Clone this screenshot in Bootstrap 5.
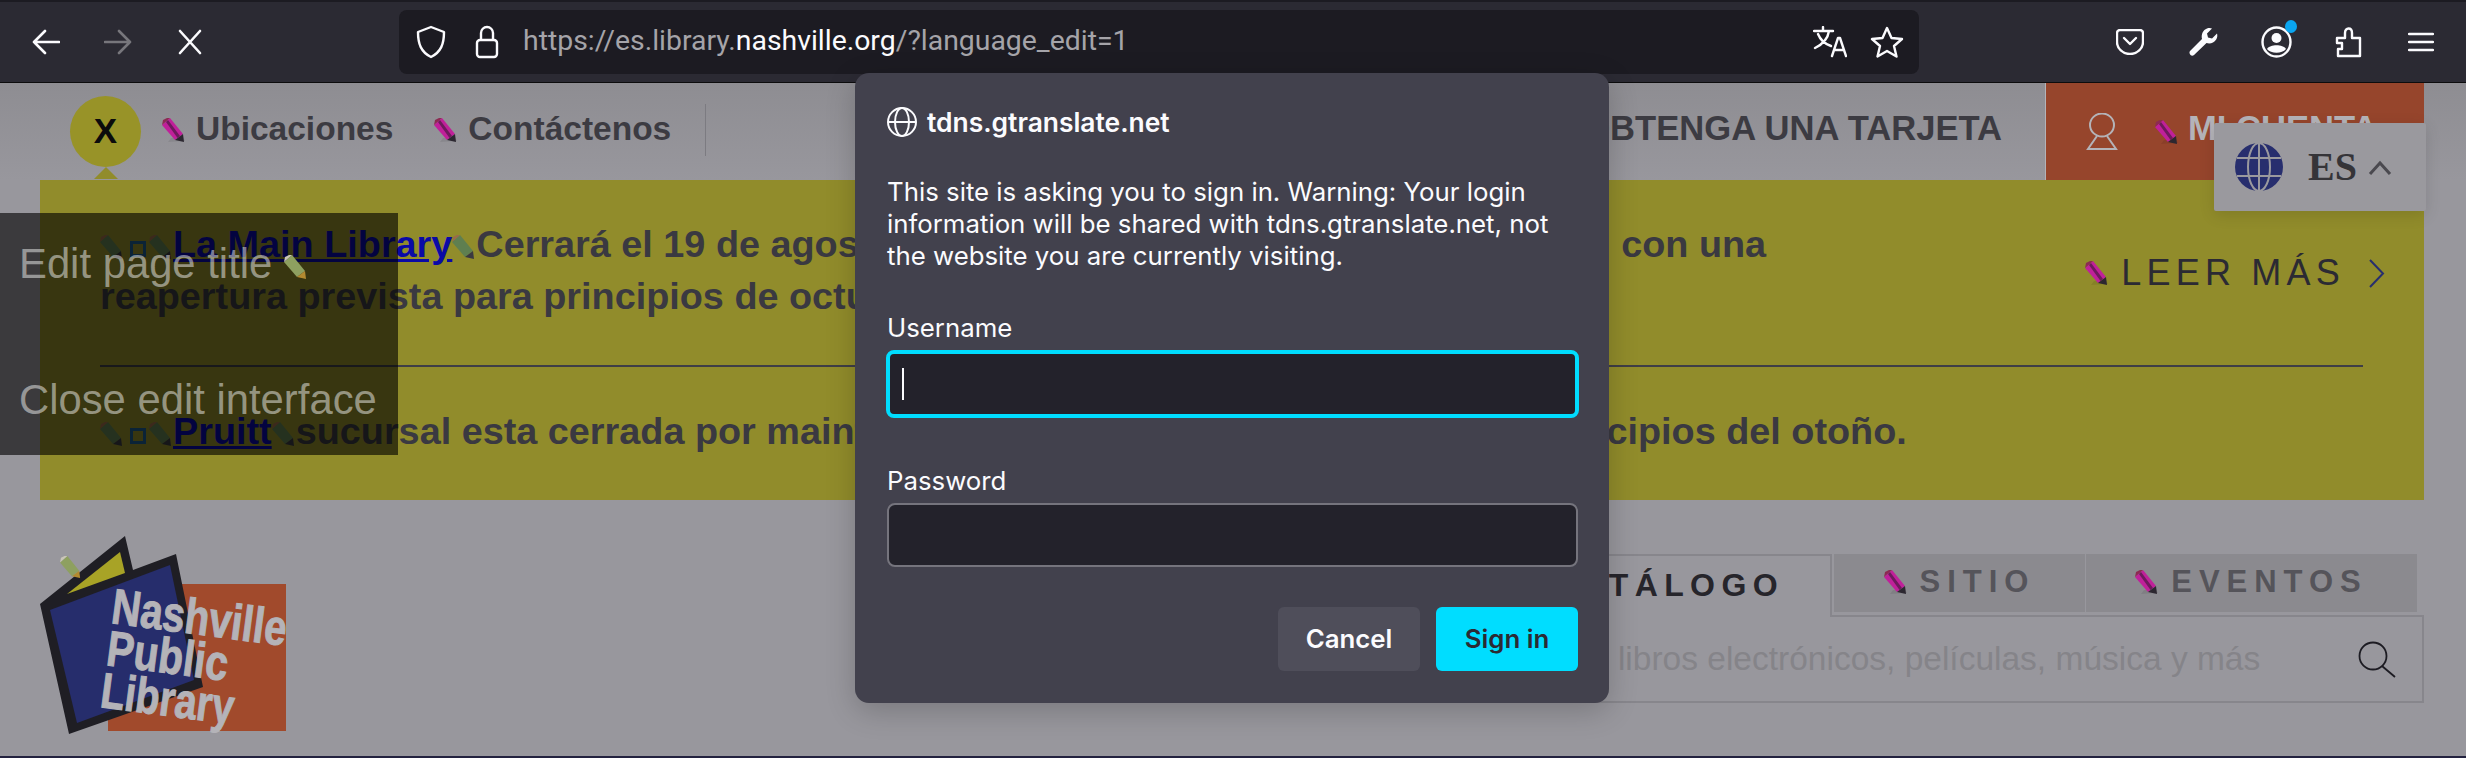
<!DOCTYPE html>
<html lang="es">
<head>
  <meta charset="UTF-8">
  <title>Nashville Public Library</title>
  <link href="https://cdn.jsdelivr.net/npm/bootstrap@5.3.3/dist/css/bootstrap.min.css" rel="stylesheet">
  <style>
    html, body { height: 100%; }
    body {
      background: #98979d;
      font-family: "Liberation Sans", Arial, sans-serif;
      overflow: hidden;
      position: relative;
      border-bottom: 2px solid #23223f;
    }

    /* barra del navegador */
    .top-strip { height: 2px; background: #1c1b22; }
    .tool-bar { height: 81px; background: #2b2a33; border-bottom: 1px solid #0c0c0d; padding-bottom: 1px; }
    .tool-icon { flex: none; display: block; }
    .url-bar {
      width: 1520px; height: 64px; margin-left: 197px;
      background: #1c1b22; border-radius: 8px;
      font-family: Roboto, sans-serif; font-size: 28.4px; color: #a5a4a9;
      padding: 0 15px 0 17px;
    }
    .url-bar b { color: #fbfbfe; font-weight: 400; }
    .url-text { margin-left: 24px; }

    /* cabecera del sitio */
    .site-head { height: 97px; background: linear-gradient(#8e8d92, #98979d); }
    .x-badge {
      width: 71px; height: 71px; margin: 13px 0 0 70px; flex: none;
      background: #989328; color: #0b0b0c; border-radius: 50%;
      font-size: 35px; font-weight: 700;
    }
    .x-badge::after {
      content: ""; position: absolute; left: 24px; top: 71px;
      border: 12px solid transparent; border-top: 0; border-bottom-color: #918c2b; border-bottom-width: 12px;
    }
    .head-link { font-size: 33.5px; font-weight: 700; color: #3c3b42; white-space: nowrap; }
    .head-rule { width: 1px; height: 52px; background: #7c7b81; margin-left: 34px; }
    .pen { display: inline-block; width: 24px; height: 24px; flex: none; }
    .card-link-top { font-size: 34.6px; margin-right: 43px; margin-bottom: 6px; }
    .account-box {
      width: 379px; height: 97px; margin-right: 42px; flex: none;
      background: #96452c; border-left: 1px solid #b4b3b8; padding-left: 40px;
      color: #b4b3b8; font-size: 34.6px; font-weight: 700; white-space: nowrap;
    }
    .account-name { margin: 0 0 6px 9px; }

    /* aviso amarillo */
    .notice-box {
      height: 320px; margin: 0 42px 0 40px; padding: 38px 61px 0 60px;
      background: #918c2b; color: #3a3941;
      font-size: 37.8px; font-weight: 700; line-height: 52px;
    }
    .notice-box a { color: #0a0aa6; }
    .blue-sq { display: inline-block; width: 16px; height: 16px; border: 3px solid #1d5a8c; margin: 0 3px 0 6px; }
    .notice-rule { height: 2px; background: #3f3e46; margin: 43px 0 38px; }
    .read-more {
      color: #2b2a33; font-size: 36px; font-weight: 400; letter-spacing: 5.2px;
      white-space: nowrap; margin: 6px -22px 0 0; line-height: 40px;
    }
    .read-pen { margin-right: 12px; }

    /* logo y buscador */
    .lower-part { padding: 30px 42px 0 40px; }
    .logo-word { font-family: "Liberation Sans", Arial, sans-serif; font-weight: 700; fill: #b4b3b8; stroke: #b4b3b8; stroke-width: 1; }
    .search-part { width: 961px; margin-top: 24px; }
    .tab-row { height: 61px; }
    .tab-item {
      height: 58px; background: #8b8a8f; color: #55545a; margin-right: 1px; padding-bottom: 2px; gap: 12px;
      font-size: 31px; font-weight: 700; letter-spacing: 7px;
    }
    .tab-on {
      width: 369px; height: 63px; background: #98979d; color: #26252b; margin-right: 2px; padding-bottom: 4px;
      border: 2px solid #87868c; border-bottom: 0; position: relative;
      font-size: 32px; letter-spacing: 6.4px; padding-left: 0;
    }
    .search-box { height: 88px; border: 2px solid #87868c; padding-right: 26px; }
    .search-field {
      background: transparent; border: 0; border-radius: 0; box-shadow: none;
      font-size: 33.5px; padding: 0 0 0 30px; height: 60px;
    }
    .search-field::placeholder { color: #858489; opacity: 1; }
    .search-field:focus { background: transparent; box-shadow: none; }

    /* cosas por encima de la pagina */
    .edit-panel {
      position: absolute; left: 0; top: 213px; width: 398px; height: 242px;
      background: rgba(0, 0, 0, .61); color: rgba(255, 255, 255, .48);
      font-size: 41.8px; line-height: 46px; padding: 28px 0 0 19px; white-space: nowrap;
    }
    .edit-panel div + div { margin-top: 90px; }
    .lang-box {
      position: absolute; left: 2214px; top: 123px; width: 212px; height: 88px;
      background: #9a999e; box-shadow: 0 4px 16px rgba(0, 0, 0, .12); border-radius: 2px;
      padding-left: 21px; color: #353438;
      font-family: "Liberation Serif", serif; font-size: 40px; font-weight: 700;
    }
    .login-dialog {
      position: absolute; left: 855px; top: 73px; width: 754px; height: 630px; z-index: 10;
      background: #42414d; color: #fbfbfe; border-radius: 14px;
      box-shadow: 0 8px 30px rgba(0, 0, 0, .2);
      padding: 31px 31px 0 32px;
      font-family: Inter, sans-serif; font-size: 25.8px; line-height: 32px;
    }
    .dialog-host { font-weight: 600; font-size: 26.4px; line-height: 36px; margin-bottom: 36px; margin-left: 0; gap: 10px; }
    .dialog-msg { margin-bottom: 40px; white-space: nowrap; }
    .dialog-label { display: block; margin-bottom: 6px; line-height: 32px; }
    .dialog-field {
      height: 64px; background: #23222b; border: 2px solid #75747d; border-radius: 8px;
      box-shadow: none; color: #fbfbfe; margin-bottom: 23px; position: relative;
    }
    .dialog-field:focus { background: #23222b; border-color: #75747d; box-shadow: none; color: #fbfbfe; }
    .field-on {
      height: 68px; margin: 0 -1px 47px -1px; width: calc(100% + 2px);
      border: 4px solid #00ddff;
    }
    .field-on::before {
      content: ""; position: absolute; left: 12px; top: 14px; width: 2px; height: 32px; background: #fbfbfe;
    }
    .btn-cancel, .btn-signin {
      width: 142px; height: 64px; border: 0; border-radius: 6px; padding: 0;
      font-family: Inter, sans-serif; font-size: 25.8px; font-weight: 600;
    }
    .btn-cancel { background: #4f4e5a; color: #fbfbfe; }
    .btn-signin { background: #00ddff; color: #2b2a33; }
  </style>
</head>
<body>

<svg width="0" height="0" class="position-absolute">
  <symbol id="pen-pink" viewBox="0 0 24 24">
    <polygon points="6,24 23,23 21,19 9,20" fill="#000" opacity=".08"/>
    <polygon points="0,7 8,0 21,16 13,22" fill="#c0209a"/>
    <polygon points="4,4 6,2 18,18 15.500,20" fill="#6d1a5c"/>
    <polygon points="0,7 8,0 5,0 1,2" fill="#8c2a52"/>
    <polygon points="13,22 21,16 22,24" fill="#2c2730"/>
  </symbol>
  <symbol id="pen-green" viewBox="0 0 24 24">
    <polygon points="0,7 8,0 21,16 13,22" fill="#5f7f50"/>
    <polygon points="0,7 8,0 5,0 1,2" fill="#9a6a4a"/>
    <polygon points="13,22 21,16 22,24" fill="#3a3941"/>
  </symbol>
  <symbol id="pen-pale" viewBox="0 0 24 24">
    <polygon points="0,7 8,0 21,16 13,22" fill="#8ea060"/>
    <polygon points="0,7 8,0 5,0 1,2" fill="#c9c5b8"/>
    <polygon points="13,22 21,16 22,24" fill="#b38a30"/>
  </symbol>
</svg>

<div class="top-strip"></div>

<!-- barra de firefox -->
<div class="tool-bar d-flex align-items-center">
  <svg class="tool-icon" style="margin-left:32px" width="28" height="26" viewBox="0 0 28 26" fill="none" stroke="#fbfbfe" stroke-width="2.600" stroke-linecap="round" stroke-linejoin="round"><path d="M2 13h25M13 2 2 13l11 11"/></svg>
  <svg class="tool-icon" style="margin-left:44px" width="28" height="26" viewBox="0 0 28 26" fill="none" stroke="#77767c" stroke-width="2.600" stroke-linecap="round" stroke-linejoin="round"><path d="M26 13H1M15 2l11 11-11 11"/></svg>
  <svg class="tool-icon" style="margin-left:46px" width="24" height="26" viewBox="0 0 24 26" fill="none" stroke="#fbfbfe" stroke-width="2.600" stroke-linecap="round"><path d="M2 2l20 22M22 2 2 24"/></svg>

  <div class="url-bar d-flex align-items-center" style="margin-left:197px">
    <svg class="tool-icon" width="30" height="34" viewBox="0 0 30 34" fill="none" stroke="#fbfbfe" stroke-width="2.400" stroke-linejoin="round"><path d="M15 2 28 7c0 12-3 20-13 25C5 27 2 19 2 7z"/></svg>
    <svg class="tool-icon" style="margin-left:29px" width="24" height="34" viewBox="0 0 24 34" fill="none" stroke="#fbfbfe" stroke-width="2.400" stroke-linejoin="round"><rect x="2" y="15" width="20" height="17" rx="3"/><path d="M6 15V8a6 6 0 0 1 12 0v7"/></svg>
    <span class="url-text">https://es.library.<b>nashville.org</b>/?language_edit=1</span>
    <svg class="tool-icon ms-auto" width="34" height="32" viewBox="0 0 34 32" fill="none" stroke="#fbfbfe" stroke-width="2.400" stroke-linecap="round" stroke-linejoin="round"><path d="M1 5h19M10 1v4M16 5c-1 7-6 13-14 17M5 8c2 5 7 10 13 12M19 30l6-18 2 0 6 18M21 24h10"/></svg>
    <svg class="tool-icon" style="margin-left:23px" width="34" height="32" viewBox="0 0 34 32" fill="none" stroke="#fbfbfe" stroke-width="2.400" stroke-linejoin="round"><path d="M17 2l4.500 10 10.500 1-8 7 2.500 10.500L17 25l-9.500 5.500L10 20l-8-7 10.500-1z"/></svg>
  </div>

  <svg class="tool-icon" style="margin-left:197px" width="28" height="26" viewBox="0 0 28 26" fill="none" stroke="#fbfbfe" stroke-width="2.400" stroke-linecap="round" stroke-linejoin="round"><path d="M4 1h20a3 3 0 0 1 3 3v9a13 12 0 0 1-26 0V4a3 3 0 0 1 3-3z"/><path d="M8 9l6 6 6-6"/></svg>
  <svg class="tool-icon" style="margin-left:44px" width="30" height="30" viewBox="0 0 30 30" fill="#fbfbfe"><path d="M2 24 14 12c-1-5 1-9 5-10.500 2-.8 4-.5 5 0l-5 5 1 4 4 1 5-5c.6 2 .4 4-.8 6-2.400 3.500-6.200 4.700-9.700 3.500L6 28c-1 1-2.500 1-3.500 0S1 25 2 24z"/></svg>
  <div class="position-relative" style="margin-left:43px;height:32px">
    <svg class="tool-icon" width="31" height="32" viewBox="0 0 31 32" fill="none" stroke="#fbfbfe" stroke-width="2.400"><ellipse cx="15.500" cy="16" rx="14" ry="14.500"/><circle cx="15.500" cy="12" r="5" fill="#fbfbfe" stroke="none"/><path d="M6 23c3-5 16-5 19 0-4 5-15 5-19 0z" fill="#fbfbfe" stroke="none"/></svg>
    <span class="position-absolute rounded-circle" style="left:24px;top:-6px;width:12px;height:13px;background:#0aa5f0"></span>
  </div>
  <svg class="tool-icon" style="margin-left:43px" width="27" height="32" viewBox="0 0 27 32" fill="none" stroke="#fbfbfe" stroke-width="2.400" stroke-linejoin="round"><path d="M2 12h8V7c0-6 7-6 7 0v5h8v18H3v-7h4v-6H2z"/></svg>
  <svg class="tool-icon" style="margin-left:46px" width="26" height="20" viewBox="0 0 26 20" stroke="#fbfbfe" stroke-width="2.400" stroke-linecap="round"><path d="M1 2h24M1 10h24M1 18h24"/></svg>
</div>

<!-- cabecera -->
<header class="site-head d-flex">
  <div class="x-badge d-flex align-items-center justify-content-center position-relative">X</div>
  <div class="d-flex align-items-center" style="margin-bottom:4px">
    <svg class="pen" style="margin-left:21px"><use href="#pen-pink"/></svg>
    <span class="head-link" style="margin-left:10px">Ubicaciones</span>
    <svg class="pen" style="margin-left:41px"><use href="#pen-pink"/></svg>
    <span class="head-link" style="margin-left:10px">Contáctenos</span>
    <span class="head-rule"></span>
  </div>
  <div class="ms-auto d-flex align-items-center">
    <span class="head-link card-link-top">OBTENGA UNA TARJETA</span>
    <div class="account-box d-flex align-items-center">
      <svg class="tool-icon" width="32" height="37" viewBox="0 0 32 37" fill="none" stroke="#b4b3b8" stroke-width="2"><ellipse cx="16" cy="12" rx="12" ry="11.500"/><path d="M11 23 2 36h28l-9-13"/></svg>
      <svg class="pen" style="margin-left:37px"><use href="#pen-pink"/></svg>
      <span class="account-name">MI CUENTA</span>
    </div>
  </div>
</header>

<!-- aviso -->
<section class="notice-box">
  <div class="d-flex justify-content-between">
    <p class="m-0 text-nowrap"><svg class="pen"><use href="#pen-green"/></svg><span class="blue-sq"></span><svg class="pen"><use href="#pen-green"/></svg><a href="#">La Main Library</a><svg class="pen"><use href="#pen-green"/></svg>Cerrará el 19 de agosto para realizar reparaciones importantes, con una<br>
      reapertura prevista para principios de octubre.
    </p>
    <div class="read-more d-flex align-items-center">
      <svg class="pen read-pen"><use href="#pen-pink"/></svg>LEER MÁS
      <svg class="tool-icon" style="margin-left:23px" width="17" height="29" viewBox="0 0 17 29" fill="none" stroke="#272e6e" stroke-width="2"><path d="M2 1l13 13.500L2 28"/></svg>
    </div>
  </div>
  <div class="notice-rule"></div>
  <p class="m-0 text-nowrap"><svg class="pen"><use href="#pen-green"/></svg><span class="blue-sq"></span><svg class="pen"><use href="#pen-green"/></svg><a href="#">Pruitt</a><svg class="pen"><use href="#pen-green"/></svg>sucursal esta cerrada por maintenance, y una reapertura prevista en principios del otoño.
  </p>
</section>

<!-- logo y buscador -->
<section class="lower-part d-flex justify-content-between">
  <svg width="250" height="210" viewBox="40 530 250 210">
    <rect x="108" y="584" width="178" height="147" fill="#a14a2c"/>
    <polygon points="40,604 125,536 133,570 176,554 203,687 69,734" fill="#1f1e24"/>
    <polygon points="67,594 120,552 125,573" fill="#a8a326"/>
    <polygon points="50,610 170,565 194,680 77,723" fill="#262d6c"/>
    <use href="#pen-pale" x="60" y="556" width="22" height="22"/>
    <text class="logo-word" transform="translate(110 623) rotate(7.500)" font-size="50" textLength="176" lengthAdjust="spacingAndGlyphs">Nashville</text>
    <text class="logo-word" transform="translate(105 665) rotate(7.500)" font-size="50" textLength="122" lengthAdjust="spacingAndGlyphs">Public</text>
    <text class="logo-word" transform="translate(99 707) rotate(7.500)" font-size="50" textLength="134" lengthAdjust="spacingAndGlyphs">Library</text>
  </svg>

  <div class="search-part">
    <div class="tab-row d-flex">
      <div class="tab-item tab-on d-flex align-items-center justify-content-end" style="padding-right:46px">CATÁLOGO</div>
      <div class="tab-item d-flex align-items-center justify-content-center" style="width:251px;margin-right:1px"><svg class="pen"><use href="#pen-pink"/></svg>SITIO</div>
      <div class="tab-item d-flex align-items-center justify-content-center" style="width:331px"><svg class="pen"><use href="#pen-pink"/></svg>EVENTOS</div>
    </div>
    <div class="search-box d-flex align-items-center">
      <input class="form-control search-field" type="text" placeholder="Busque libros electrónicos, películas, música y más">
      <svg class="tool-icon" width="38" height="37" viewBox="0 0 38 37" fill="none" stroke="#1c1b22" stroke-width="1.800"><circle cx="15" cy="15" r="13.500"/><path d="M24 25l13 11"/></svg>
    </div>
  </div>
</section>

<!-- interfaz de edicion -->
<div class="edit-panel">
  <div>Edit page title <svg class="pen"><use href="#pen-pale"/></svg></div>
  <div>Close edit interface</div>
</div>

<!-- selector de idioma -->
<div class="lang-box d-flex align-items-center">
  <svg class="tool-icon" width="48" height="48" viewBox="0 0 48 48"><circle cx="24" cy="24" r="24" fill="#272e6e"/><g fill="none" stroke="#9a999e" stroke-width="2"><ellipse cx="24" cy="24" rx="11" ry="24"/><path d="M24 0v48M2 15h44M2 33h44"/></g></svg>
  <span style="margin-left:25px">ES</span>
  <svg class="tool-icon" style="margin-left:11px" width="24" height="15" viewBox="0 0 24 15" fill="none" stroke="#4a494f" stroke-width="3"><path d="M2 14 12 3l10 11"/></svg>
</div>

<!-- dialogo de login -->
<div class="login-dialog">
  <div class="dialog-host d-flex align-items-center">
    <svg class="tool-icon" width="30" height="30" viewBox="0 0 30 30" fill="none" stroke="#fbfbfe" stroke-width="2"><circle cx="15" cy="15" r="14"/><ellipse cx="15" cy="15" rx="7" ry="14"/><path d="M1 15h28"/></svg>
    tdns.gtranslate.net
  </div>
  <p class="dialog-msg">This site is asking you to sign in. Warning: Your login<br>information will be shared with tdns.gtranslate.net, not<br>the website you are currently visiting.</p>
  <form>
    <label class="dialog-label">Username</label>
    <div class="form-control dialog-field field-on"></div>
    <label class="dialog-label">Password</label>
    <input class="form-control dialog-field" type="password">
    <div class="d-flex justify-content-end gap-3" style="margin-top:40px">
      <button type="button" class="btn btn-cancel">Cancel</button>
      <button type="button" class="btn btn-signin">Sign in</button>
    </div>
  </form>
</div>

<script src="https://cdn.jsdelivr.net/npm/bootstrap@5.3.3/dist/js/bootstrap.bundle.min.js"></script>
</body>
</html>
